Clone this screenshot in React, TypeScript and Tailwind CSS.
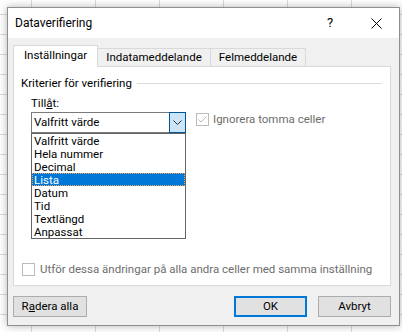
import React from 'react'

const options = ['Valfritt värde', 'Hela nummer', 'Decimal', 'Lista', 'Datum', 'Tid', 'Textlängd', 'Anpassat']

function CheckBox({ checked }: { checked?: boolean }) {
  return (
    <span className="w-[13px] h-[13px] border border-[#bcbcbc] bg-white flex items-center justify-center shrink-0">
      {checked && (
        <svg width="11" height="11" viewBox="0 0 11 11">
          <path d="M1.5 5.5 L4 8 L9.5 2.5" fill="none" stroke="#bcbcbc" strokeWidth="1" />
        </svg>
      )}
    </span>
  )
}

export default function App() {
  return (
    <div className="relative w-[402px] h-[332px] overflow-hidden bg-white bg-[linear-gradient(90deg,#dadada_1px,transparent_1px),linear-gradient(#dadada_1px,transparent_1px)] bg-[size:64px_20px] bg-[position:31px_14px] pt-[7px] pl-[7px] font-['Roboto',sans-serif] text-[11.5px] text-black">
      <div className="w-[393px] h-[319px] border border-[#8e8e8e] bg-[#f0f0f0] shadow-[0_0_8px_rgba(0,0,0,0.3)] flex flex-col">
        {/* titel */}
        <div className="h-[30px] bg-white flex items-center shrink-0">
          <span className="pl-[7px] flex-1 leading-none text-[12px]">Dataverifiering</span>
          <span className="w-[46px] h-full flex items-center justify-center text-[13px]">?</span>
          <span className="w-[46px] h-full flex items-center justify-center">
            <svg width="11" height="11" viewBox="0 0 11 11">
              <path d="M0.5 0.5 L10.5 10.5 M10.5 0.5 L0.5 10.5" stroke="#000" strokeWidth="1" />
            </svg>
          </span>
        </div>

        <div className="pl-[5px] pt-[7px] flex flex-col">
          {/* flikar */}
          <div className="flex items-end -mb-px relative z-10">
            <div className="w-[85px] h-[22px] bg-white border border-b-0 border-[#d9d9d9] flex items-center justify-center pb-[1px] whitespace-nowrap">
              Inställningar
            </div>
            <div className="-ml-px w-[114px] h-[19px] border border-[#d9d9d9] flex items-center justify-center pt-[1px] whitespace-nowrap">
              Indatameddelande
            </div>
            <div className="-ml-px w-[96px] h-[19px] border border-[#d9d9d9] flex items-center justify-center pt-[1px] whitespace-nowrap">
              Felmeddelande
            </div>
          </div>

          {/* panel */}
          <div className="relative w-[378px] h-[220px] bg-white border border-[#d9d9d9] flex flex-col">
            <div className="flex items-center pl-[7px] pt-[8px] h-[24px]">
              <span className="leading-[16px]">Kriterier för verifiering</span>
              <span className="flex-1 h-px bg-[#dcdcdc] ml-[5px] mr-[8px]" />
            </div>
            <div className="pl-[17px] mt-[4px] leading-[16px]">
              Till<u>å</u>t:
            </div>
            <div className="flex items-start mt-[1px] pl-[17px]">
              <div className="relative w-[155px] h-[21px] border border-[#7a7a7a] flex items-center">
                <span className="flex-1 pl-[2px] leading-none">Valfritt värde</span>
                <span className="w-[17px] h-[21px] -mr-px -my-px bg-[#cce4f7] border border-[#005499] flex items-center justify-center">
                  <svg width="9" height="5" viewBox="0 0 9 5">
                    <path d="M0.5 0.5 L4.5 4.5 L8.5 0.5" fill="none" stroke="#333" strokeWidth="1" />
                  </svg>
                </span>
                {/* lista */}
                <div className="absolute left-[-1px] top-[20px] w-[155px] border border-[#646464] bg-white flex flex-col z-20">
                  {options.map((o) =>
                    o === 'Lista' ? (
                      <div key={o} className="h-[13px] leading-[12px] pl-[1px] bg-[#0078d7] text-white border border-dotted border-[#f5a35a] whitespace-nowrap">
                        {o}
                      </div>
                    ) : (
                      <div key={o} className="h-[13px] leading-[14px] pl-[2px] whitespace-nowrap">
                        {o}
                      </div>
                    )
                  )}
                </div>
              </div>
              <div className="flex items-center ml-[10px] mt-[1px] gap-[4px] text-[#6d6d6d]">
                <CheckBox checked />
                <span className="leading-[13px] whitespace-nowrap">Ignorera tomma celler</span>
              </div>
            </div>
            <div className="mt-auto mb-[8px] pl-[8px] flex items-center gap-[5px] text-[#6d6d6d]">
              <CheckBox />
              <span className="leading-[16px] whitespace-nowrap">Utför dessa ändringar på alla andra celler med samma inställning</span>
            </div>
          </div>

          {/* knappar */}
          <div className="flex mt-[10px] w-[378px]">
            <button className="w-[74px] h-[21px] bg-[#e1e1e1] border border-[#adadad] leading-none">
              R<u>a</u>dera alla
            </button>
            <span className="flex-1" />
            <button className="w-[73px] h-[21px] bg-[#e1e1e1] border-2 border-[#0078d7] leading-none">OK</button>
            <button className="w-[73px] h-[21px] ml-[11px] bg-[#e1e1e1] border border-[#adadad] leading-none">Avbryt</button>
          </div>
        </div>
      </div>
    </div>
  )
}
